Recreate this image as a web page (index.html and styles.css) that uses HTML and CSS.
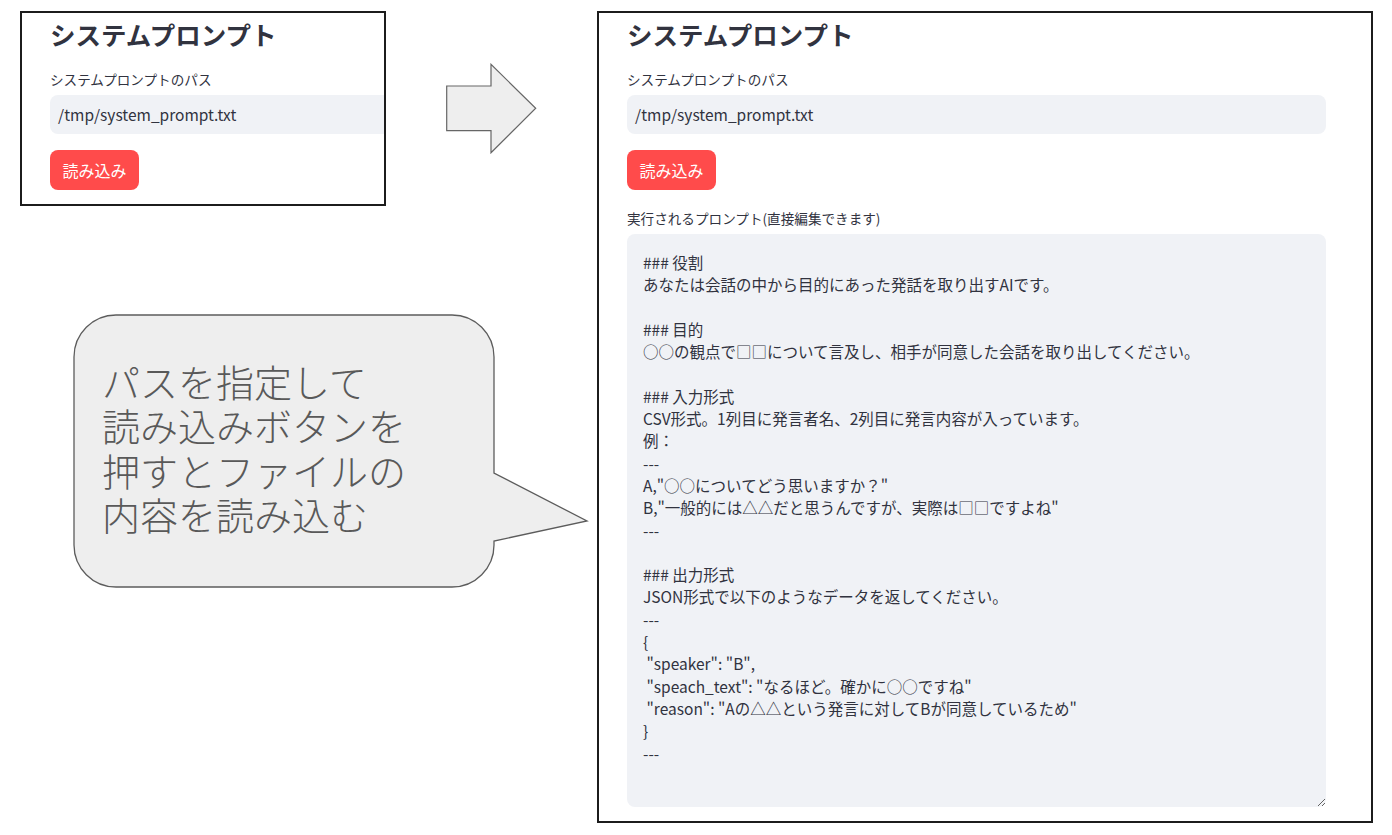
FILE: index.html
```html
<!DOCTYPE html>
<html lang="ja">
<head>
<meta charset="utf-8">
<title>システムプロンプト</title>
<link rel="stylesheet" href="styles.css">
</head>
<body>
<div class="canvas">
  <section class="frame frame-before">
    <div class="app">
      <h3 class="app-title">システムプロンプト</h3>
      <div class="field-label">システムプロンプトのパス</div>
      <div class="text-input">/tmp/system_prompt.txt</div>
      <button class="btn-primary" type="button">読み込み</button>
    </div>
  </section>

  <svg class="arrow" width="93" height="92" viewBox="0 0 93 92" aria-hidden="true">
    <polygon points="1.7,23 46,23 46,1.3 90.7,45.3 46,89.7 46,67.7 1.7,67.7" fill="#eeeeee" stroke="#666666" stroke-width="1.2" stroke-linejoin="miter"/>
  </svg>

  <div class="callout">
    <svg class="callout-shape" width="522" height="282" viewBox="0 0 522 282" aria-hidden="true">
      <path d="M 46 5 H 382 A 42 42 0 0 1 424 47 V 163 L 517 211 L 424 231 V 235 A 42 42 0 0 1 382 277 H 46 A 42 42 0 0 1 4 235 V 47 A 42 42 0 0 1 46 5 Z" fill="#eeeeee" stroke="#5c5c5c" stroke-width="1.3"/>
    </svg>
    <p class="callout-text">パスを指定して<br>読み込みボタンを<br>押すとファイルの<br>内容を読み込む</p>
  </div>

  <section class="frame frame-after">
    <div class="app">
      <h3 class="app-title">システムプロンプト</h3>
      <div class="field-label">システムプロンプトのパス</div>
      <div class="text-input">/tmp/system_prompt.txt</div>
      <button class="btn-primary" type="button">読み込み</button>
      <div class="field-label field-label-gap">実行されるプロンプト(直接編集できます)</div>
      <textarea class="prompt-area" spellcheck="false">### 役割
あなたは会話の中から目的にあった発話を取り出すAIです。

### 目的
○○の観点で□□について言及し、相手が同意した会話を取り出してください。

### 入力形式
CSV形式。1列目に発言者名、2列目に発言内容が入っています。
例：
---
A,"○○についてどう思いますか？"
B,"一般的には△△だと思うんですが、実際は□□ですよね"
---

### 出力形式
JSON形式で以下のようなデータを返してください。
---
{
 "speaker": "B",
 "speach_text": "なるほど。確かに○○ですね"
 "reason": "Aの△△という発言に対してBが同意しているため"
}
---</textarea>
    </div>
  </section>
</div>
</body>
</html>
```

FILE: styles.css
```css
* {
  box-sizing: border-box;
}

html,
body {
  margin: 0;
  padding: 0;
  background: #ffffff;
}

body {
  font-family: "Noto Sans CJK JP", "Noto Sans", sans-serif;
  color: #31333f;
}

.canvas {
  position: relative;
  width: 1392px;
  height: 835px;
  overflow: hidden;
}

/* screenshot frames placed on the slide canvas */
.frame {
  position: absolute;
  border: 2px solid #1c1c1c;
  background: #ffffff;
  overflow: hidden;
}

.frame-before {
  left: 20px;
  top: 11px;
  width: 366px;
  height: 195px;
}

.frame-after {
  left: 597px;
  top: 11px;
  width: 776px;
  height: 812px;
}

.app {
  width: 727px;
  padding: 6px 0 0 28px;
  display: flex;
  flex-direction: column;
  align-items: flex-start;
}

.app-title {
  margin: 0;
  font-size: 25.5px;
  line-height: 30px;
  font-weight: 600;
  color: #31333f;
  white-space: nowrap;
}

.field-label {
  margin-top: 20.2px;
  font-size: 13.6px;
  line-height: 20px;
  color: #31333f;
  white-space: nowrap;
}

.field-label-gap {
  margin-top: 17.7px;
}

.text-input {
  align-self: stretch;
  margin-top: 5.8px;
  height: 39px;
  padding: 0 8px;
  border-radius: 8px;
  background: #f0f2f6;
  font-size: 15.5px;
  line-height: 39px;
  color: #31333f;
  white-space: nowrap;
}

.btn-primary {
  margin-top: 16px;
  width: 89px;
  height: 40px;
  padding: 0;
  border: none;
  border-radius: 8px;
  background: #ff4b4b;
  color: #ffffff;
  font-family: inherit;
  font-size: 16px;
  line-height: 40px;
  font-weight: 400;
}

.prompt-area {
  align-self: stretch;
  display: block;
  margin: 6.3px 0 0 0;
  height: 573px;
  padding: 17px 16px;
  border: none;
  border-radius: 8px;
  outline: none;
  background: #f0f2f6;
  color: #31333f;
  font-family: inherit;
  font-size: 15.5px;
  line-height: 22.3px;
  resize: vertical;
  overflow: hidden;
}

/* diagram pieces on the canvas */
.arrow {
  position: absolute;
  left: 445px;
  top: 63px;
}

.callout {
  position: absolute;
  left: 70px;
  top: 310px;
  width: 522px;
  height: 282px;
}

.callout-shape {
  position: absolute;
  left: 0;
  top: 0;
}

.callout-text {
  position: absolute;
  left: 32px;
  top: 48.6px;
  margin: 0;
  font-size: 38px;
  line-height: 44.5px;
  font-weight: 300;
  color: #595959;
  white-space: nowrap;
}
```
